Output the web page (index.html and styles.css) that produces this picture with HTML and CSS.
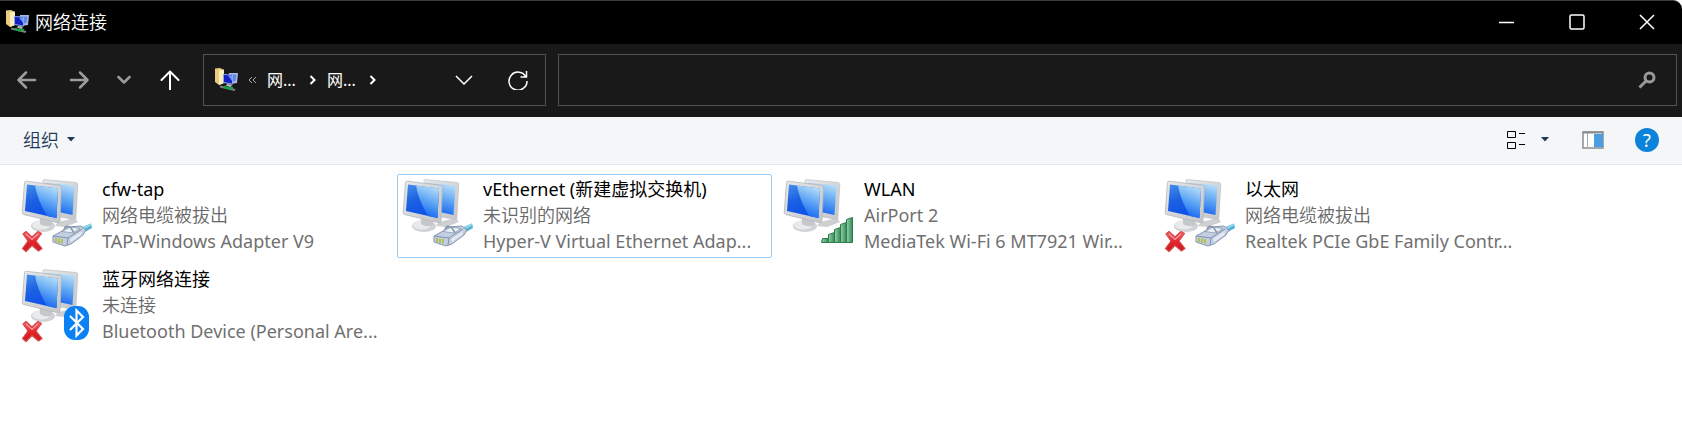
FILE: index.html
```html
<!DOCTYPE html>
<html lang="zh-CN">
<head>
<meta charset="utf-8">
<title>网络连接</title>
<link rel="stylesheet" href="styles.css">
</head>
<body>
<svg class="defs" aria-hidden="true">
  <defs>
    <linearGradient id="screen" x1="0" y1="0" x2="0.4" y2="1">
      <stop offset="0" stop-color="#4590ea"/><stop offset="0.5" stop-color="#1c60e2"/><stop offset="1" stop-color="#0d50ea"/>
    </linearGradient>
    <linearGradient id="shine" x1="0.6" y1="0" x2="0.3" y2="1">
      <stop offset="0" stop-color="#b4dcf9"/><stop offset="0.45" stop-color="#5fa6f4"/><stop offset="1" stop-color="#0b5cf0"/>
    </linearGradient>
    <linearGradient id="bezel" x1="0" y1="0" x2="1" y2="1">
      <stop offset="0" stop-color="#e6e8ea"/><stop offset="1" stop-color="#c3c5c8"/>
    </linearGradient>
    <linearGradient id="bars" x1="0" y1="0" x2="1" y2="0">
      <stop offset="0" stop-color="#9bd0ae"/><stop offset="1" stop-color="#2f8a52"/>
    </linearGradient>
    <linearGradient id="redx" x1="0" y1="0" x2="0" y2="1">
      <stop offset="0" stop-color="#f0686c"/><stop offset="0.5" stop-color="#e3262c"/><stop offset="1" stop-color="#c8181e"/>
    </linearGradient>
    <symbol id="monitors" viewBox="6 1 72 76">
      <path d="M43 45 60 41 63 45 50 50 40 49Z" fill="#cdcfd1"/>
      <path d="M28 3.500Q28 2.500 29.500 2.600L61 5.500Q63 5.800 62.800 7.500L60.800 41.500Q60.500 43 59 42.500L30 37Z" fill="url(#bezel)" stroke="#bfc2c5" stroke-width=".7"/>
      <path d="M31 6 59.500 8.500 57.500 38 34 33Z" fill="url(#shine)"/>
      <ellipse cx="28" cy="49" rx="12" ry="6" fill="#d0d2d4"/>
      <ellipse cx="26" cy="48" rx="9" ry="4.500" fill="#e9eaec"/>
      <path d="M25 40 37 43 37 48Q31 51 25 47Z" fill="#c5c7ca"/>
      <path d="M9.500 5.500Q9.700 4 11.300 4.200L44.500 8.300Q46.500 8.600 46.400 10.500L45 44Q44.800 46.200 42.500 45.700L8.500 37.500Q7 37.100 7.200 35.500Z" fill="url(#bezel)" stroke="#b4b7bb" stroke-width=".8"/>
      <path d="M12 7.500 43 11.500 41.500 41 10 34Z" fill="url(#screen)"/>
      <path d="M20 8.500 43 11.500 41.500 41 32 39Q22 22 20 8.500Z" fill="url(#shine)"/>
    </symbol>
    <symbol id="red-cross" viewBox="6 3 72 76">
      <path d="M8 59 11 56.500 17 62 23 56.500 26.500 58.500 21 66 27 73.500 23.500 76 17 70.500 11 76.500 7.500 73.500 13 66Z" fill="url(#redx)" stroke="#d6494d" stroke-width="1.200" stroke-linejoin="round"/>
      <path d="M11 59 17 64.500 23 59" fill="none" stroke="#f79a9c" stroke-width="1.200"/>
    </symbol>
    <symbol id="plug" viewBox="5 3 72 76">
      <path d="M62 54 75 48.500 76 53 67 58Z" fill="#4fb0d6"/>
      <path d="M62 54 75 48.500 75.500 50.500 65 56Z" fill="#8ed4ea"/>
      <path d="M37 61 46 56 51 52 65 51 70 55 67 60 55 69 49 71 37 67Z" fill="#c3cfe0" stroke="#8797af" stroke-width="1" stroke-linejoin="round"/>
      <path d="M37 61 52 63 66 54M52 63 51 70" fill="none" stroke="#8292ab" stroke-width="1"/>
      <path d="M46 56.500 57 58 64 53.500 54 52Z" fill="#eaf0f6" stroke="#8e9db4" stroke-width=".8"/>
      <path d="M54 64 66 56 65 60 55 67Z" fill="#e3eaf3"/>
      <path d="M40 63V67M43 63.500V68M46 64V68.500" stroke="#b5bf58" stroke-width="2"/>
      <path d="M48 54Q50 49 55 53L58 58" fill="none" stroke="#8796ad" stroke-width="1.500"/>
    </symbol>
    <symbol id="signal" viewBox="1 4 72 76">
      <g fill="url(#bars)" stroke="#2c7c4a" stroke-width="1">
        <path d="M40.500 64.500H46.500V68.500H39.500Z"/><path d="M46.500 60.500 52.500 58.500V68.500H46.500Z"/><path d="M52.500 55.500 58.500 53.500V68.500H52.500Z"/><path d="M58.500 50.500 64.500 48.500V68.500H58.500Z"/><path d="M64.500 45.500 70.500 43.500V68.500H64.500Z"/>
      </g>
    </symbol>
    <symbol id="bluetooth" viewBox="5 3 72 76">
      <rect x="48" y="41" width="25" height="34" rx="11" fill="#0a80f5"/>
      <path d="M54 51 67 64 60.500 70.500V45.500L67 52 54 65" fill="none" stroke="#fff" stroke-width="2.200"/>
    </symbol>
    <symbol id="folder-net" viewBox="0 0 24 24">
      <path d="M0 0.500 5 0 9 2V15L4 17 0 14Z" fill="#e9cc7c"/>
      <path d="M4 2.500 9 1.500V15L4 17Z" fill="#fdeebb"/>
      <path d="M14 5 23 5 22 15 15 16Z" fill="#a9b8ea"/><path d="M15.500 6.500 21.500 6.500 20.500 13 15 14Z" fill="#5f86ea"/>
      <path d="M8 6 18 6.500 18 16.500 8 15Z" fill="#8ea4e4"/><path d="M9 7 17 7.500 17 15.500 9 14Z" fill="#1520c4"/><path d="M13 7.500 17 7.500 17 13Z" fill="#6c9bf2"/>
      <path d="M12 16 17 16.500 16 19 11 18Z" fill="#b9bcc2"/>
      <path d="M5 18.500 20 22" stroke="#7d8083" stroke-width="2"/><path d="M9 18.500Q13 21.500 18 19.500" fill="none" stroke="#17a34a" stroke-width="2.200"/>
    </symbol>
  </defs>
</svg>
<div class="window">
  <header class="titlebar">
    <svg class="app-icon"><use href="#folder-net"/></svg>
    <h1 class="title">网络连接</h1>
    <div class="window-controls">
      <button class="window-button" aria-label="最小化"><svg width="16" height="16"><path d="M0 8.500H15"/></svg></button>
      <button class="window-button" aria-label="最大化"><svg width="16" height="16"><rect x="1" y="1" width="14" height="14" rx="1.500"/></svg></button>
      <button class="window-button" aria-label="关闭"><svg width="16" height="16"><path d="M1 1 15 15M15 1 1 15"/></svg></button>
    </div>
  </header>
  <nav class="navbar">
    <div class="nav-buttons">
      <button class="nav-button" aria-label="后退" disabled><svg width="20" height="20"><path d="M18 10H2M9 2.500 1.500 10 9 17.500"/></svg></button>
      <button class="nav-button" aria-label="前进" disabled><svg width="20" height="20"><path d="M2 10H18M11 2.500 18.500 10 11 17.500"/></svg></button>
      <button class="nav-button nav-recent" aria-label="最近位置" disabled><svg width="14" height="20"><path d="M1.500 7 7 12.500 12.500 7"/></svg></button>
      <button class="nav-button nav-up" aria-label="向上"><svg width="20" height="20"><path d="M10 19.500V1.500M1.500 10 10 1.500 18.500 10"/></svg></button>
    </div>
    <div class="address">
      <svg class="app-icon"><use href="#folder-net"/></svg>
      <svg class="overflow" width="8" height="8"><path d="M4 1 1 4 4 7M8 1 5 4 8 7"/></svg>
      <button class="crumb">网...</button>
      <svg class="crumb-arrow" width="8" height="10"><path d="M1.500 1 5.500 5 1.500 9"/></svg>
      <button class="crumb">网...</button>
      <svg class="crumb-arrow" width="8" height="10"><path d="M1.500 1 5.500 5 1.500 9"/></svg>
      <button class="address-button address-history" aria-label="历史记录"><svg width="18" height="10"><path d="M1 1 9 9 17 1"/></svg></button>
      <button class="address-button" aria-label="刷新"><svg width="20" height="20"><path d="M18 7A9 9 0 1 0 19 11M18.500 1V7H12.500"/></svg></button>
    </div>
    <div class="search">
      <input class="search-input" type="search" aria-label="搜索">
      <svg class="search-icon" width="18" height="18"><circle cx="11.500" cy="6.500" r="4.500"/><path d="M8.500 9.500 1.500 16.500"/></svg>
    </div>
  </nav>
  <div class="commands">
    <button class="organize">组织<svg width="8" height="5"><path d="M0 0H8L4 4.500Z"/></svg></button>
    <div class="view-tools">
      <button class="tool" aria-label="更改视图"><svg width="20" height="20"><path d="M1.500 1.500H9.500V7.500H1.500ZM1.500 12.500H9.500V18.500H1.500ZM13 3.500H19M13 14.500H19" fill="none" stroke="#000"/></svg></button>
      <button class="tool tool-more" aria-label="更多选项"><svg width="8" height="5"><path d="M0 0H8L4 4.500Z" fill="#1e395b"/></svg></button>
      <button class="tool tool-pane" aria-label="预览窗格"><svg width="22" height="18"><rect x="1" y="1" width="20" height="16" fill="#fff" stroke="#888c91" stroke-width="1.500"/><path d="M5.500 2V16" stroke="#a4a8ac"/><rect x="12" y="3" width="9" height="13" fill="#4a9de3"/><path d="M1 1.500H21" stroke="#888c91" stroke-width="2"/></svg></button>
      <button class="tool help" aria-label="帮助">?</button>
    </div>
  </div>
  <main class="connections">
    <article class="connection">
      <div class="device"><svg><use href="#monitors"/><use href="#red-cross"/><use href="#plug"/></svg></div>
      <div class="details"><h2 class="name">cfw-tap</h2><p class="status">网络电缆被拔出</p><p>TAP-Windows Adapter V9</p></div>
    </article>
    <article class="connection selected">
      <div class="device"><svg><use href="#monitors"/><use href="#plug"/></svg></div>
      <div class="details"><h2 class="name">vEthernet (新建虚拟交换机)</h2><p class="status">未识别的网络</p><p>Hyper-V Virtual Ethernet Adap...</p></div>
    </article>
    <article class="connection">
      <div class="device"><svg><use href="#monitors"/><use href="#signal"/></svg></div>
      <div class="details"><h2 class="name">WLAN</h2><p>AirPort 2</p><p>MediaTek Wi-Fi 6 MT7921 Wir...</p></div>
    </article>
    <article class="connection">
      <div class="device"><svg><use href="#monitors"/><use href="#red-cross"/><use href="#plug"/></svg></div>
      <div class="details"><h2 class="name">以太网</h2><p class="status">网络电缆被拔出</p><p>Realtek PCIe GbE Family Contr...</p></div>
    </article>
    <article class="connection">
      <div class="device"><svg><use href="#monitors"/><use href="#red-cross"/><use href="#bluetooth"/></svg></div>
      <div class="details"><h2 class="name">蓝牙网络连接</h2><p class="status">未连接</p><p>Bluetooth Device (Personal Are...</p></div>
    </article>
  </main>
</div>
</body>
</html>
```
FILE: styles.css
```css
* { box-sizing: border-box; }
body {
  margin: 0;
  background: #fff;
  font-family: "Noto Sans", "Noto Sans CJK SC", sans-serif;
  font-size: 18px;
}
h1, h2, p { margin: 0; font-size: inherit; font-weight: inherit; }
button {
  display: flex;
  align-items: center;
  justify-content: center;
  padding: 0;
  border: 0;
  background: none;
  color: inherit;
  font: inherit;
}
svg { display: block; flex: none; }
.defs { position: absolute; width: 0; height: 0; }
.window { min-height: 100vh; background: #fff; }
.app-icon { width: 24px; height: 24px; }

.titlebar {
  display: flex;
  align-items: center;
  height: 44px;
  padding: 0 0 2px 6px;
  border-top: 1px solid #3c3c3c;
  border-top-right-radius: 9px;
  background: #000;
  color: #fff;
}
.title { margin-left: 5px; line-height: 26px; font-weight: 350; }
.window-controls { display: flex; margin-left: auto; }
.window-button { width: 70px; height: 40px; }
.window-button svg { fill: none; stroke: #fff; stroke-width: 1.5; }

.navbar {
  display: flex;
  gap: 12px;
  height: 73px;
  padding: 10px 5px 11px 6px;
  background: #191919;
  color: #fff;
}
.nav-buttons { display: flex; align-items: center; width: 185px; }
.nav-button { width: 44px; height: 44px; }
.nav-button + .nav-button { margin-left: 9px; }
.nav-button svg { fill: none; stroke: #fff; stroke-width: 2; stroke-linecap: round; stroke-linejoin: round; }
.nav-button:disabled svg { stroke: #9c9c9c; stroke-width: 2.5; }
.nav-button + .nav-recent { width: 32px; }
.address {
  display: flex;
  align-items: center;
  width: 343px;
  padding-left: 11px;
  border: 1px solid #535353;
}
.overflow { margin: 0 11px 0 9px; fill: none; stroke: #a8a8a8; }
.crumb { line-height: 26px; font-size: 16px; }
.crumb-arrow { margin: 0 10px 0 13px; fill: none; stroke: #fff; stroke-width: 2; }
.address-button { width: 54px; height: 44px; }
.address-button svg { fill: none; stroke: #fff; stroke-width: 1.5; }
.address-history { margin-left: auto; }
.search {
  display: flex;
  flex: 1;
  align-items: center;
  padding-right: 20px;
  border: 1px solid #535353;
}
.search-input { flex: 1; height: 44px; border: 0; outline: 0; background: none; color: #fff; font: inherit; }
.search-icon { fill: none; stroke: #999; stroke-width: 3; }

.commands {
  display: flex;
  align-items: center;
  justify-content: space-between;
  height: 48px;
  padding: 0 23px 2px;
  border-bottom: 1px solid #e4e7ea;
  background: #f4f6f7;
  color: #1e395b;
}
.organize { gap: 8px; line-height: 26px; font-weight: 350; }
.organize svg { fill: #1e395b; }
.view-tools { display: flex; align-items: center; }
.tool-more { margin-left: 15px; }
.tool-pane { margin: 0 31px 0 33px; }
.help {
  width: 24px;
  height: 24px;
  border-radius: 50%;
  background: #0b83da;
  color: #fff;
  line-height: 24px;
}

.connections {
  display: grid;
  grid-template-columns: repeat(auto-fill, 375px);
  gap: 6px;
  padding: 9px 16px;
}
.connection {
  display: flex;
  gap: 9px;
  padding: 1px 4px 3px;
  border: 1px solid transparent;
  border-radius: 2px;
}
.connection.selected { border-color: #99cdf5; }
.device { padding-top: 2px; }
.device svg { width: 72px; height: 76px; }
.details { color: #707070; line-height: 26px; white-space: nowrap; }
.name { color: #000; }
.status { color: #686868; font-weight: 350; }
```
